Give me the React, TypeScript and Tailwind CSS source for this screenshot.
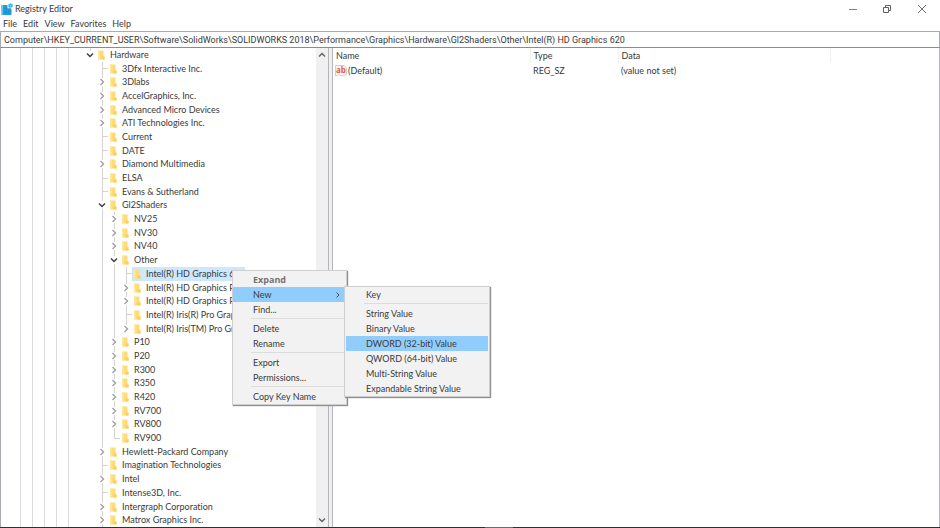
import type { ReactNode } from 'react';

type Branch = 'open' | 'closed' | 'leaf';

interface TreeRow {
  label: string;
  level: number;
  branch: Branch;
  last?: boolean;
  selected?: boolean;
}

const ROWS: TreeRow[] = [
  { label: 'Hardware', level: 0, branch: 'open', last: true },
  { label: '3Dfx Interactive Inc.', level: 1, branch: 'leaf' },
  { label: '3Dlabs', level: 1, branch: 'closed' },
  { label: 'AccelGraphics, Inc.', level: 1, branch: 'closed' },
  { label: 'Advanced Micro Devices', level: 1, branch: 'closed' },
  { label: 'ATI Technologies Inc.', level: 1, branch: 'closed' },
  { label: 'Current', level: 1, branch: 'leaf' },
  { label: 'DATE', level: 1, branch: 'leaf' },
  { label: 'Diamond Multimedia', level: 1, branch: 'closed' },
  { label: 'ELSA', level: 1, branch: 'leaf' },
  { label: 'Evans & Sutherland', level: 1, branch: 'leaf' },
  { label: 'Gl2Shaders', level: 1, branch: 'open' },
  { label: 'NV25', level: 2, branch: 'closed' },
  { label: 'NV30', level: 2, branch: 'closed' },
  { label: 'NV40', level: 2, branch: 'closed' },
  { label: 'Other', level: 2, branch: 'open' },
  { label: 'Intel(R) HD Graphics 620', level: 3, branch: 'leaf', selected: true },
  { label: 'Intel(R) HD Graphics P', level: 3, branch: 'closed' },
  { label: 'Intel(R) HD Graphics P', level: 3, branch: 'closed' },
  { label: 'Intel(R) Iris(R) Pro Grap', level: 3, branch: 'leaf' },
  { label: 'Intel(R) Iris(TM) Pro Gr', level: 3, branch: 'closed', last: true },
  { label: 'P10', level: 2, branch: 'closed' },
  { label: 'P20', level: 2, branch: 'closed' },
  { label: 'R300', level: 2, branch: 'closed' },
  { label: 'R350', level: 2, branch: 'closed' },
  { label: 'R420', level: 2, branch: 'closed' },
  { label: 'RV700', level: 2, branch: 'closed' },
  { label: 'RV800', level: 2, branch: 'closed' },
  { label: 'RV900', level: 2, branch: 'leaf', last: true },
  { label: 'Hewlett-Packard Company', level: 1, branch: 'closed' },
  { label: 'Imagination Technologies', level: 1, branch: 'leaf' },
  { label: 'Intel', level: 1, branch: 'closed' },
  { label: 'Intense3D, Inc.', level: 1, branch: 'leaf' },
  { label: 'Intergraph Corporation', level: 1, branch: 'closed' },
  { label: 'Matrox Graphics Inc.', level: 1, branch: 'closed' },
];

const KEY_PATH =
  'Computer\\HKEY_CURRENT_USER\\Software\\SolidWorks\\SOLIDWORKS 2018\\Performance\\Graphics\\Hardware\\Gl2Shaders\\Other\\Intel(R) HD Graphics 620';

function RegistryIcon() {
  return (
    <svg viewBox="0 0 12 12" className="h-3 w-3 shrink-0" aria-hidden="true">
      <path d="M.5 2h6v3.500h4V12H.5z" fill="#22a0dc" />
      <path d="M.5 2h1.500v10H.5z" fill="#6cc6ec" />
      <path d="M2 5.300h8M2 8.600h8.500M5 2v10M8 5.500V12" stroke="#1680ba" strokeWidth="0.4" />
      <path d="M7.300 1.400 9.800.2l2 1.300-.3 2.600-2.300 1-1.900-1.300z" fill="#2fb0ea" />
      <path d="M7.300 1.400 9.600 2.500l2.200-1M9.600 2.500l-.4 2.600" stroke="#9be2fb" strokeWidth="0.5" fill="none" />
    </svg>
  );
}

function FolderIcon() {
  return (
    <svg viewBox="0 0 8 10" className="h-[10px] w-2 shrink-0" aria-hidden="true">
      <path d="M1 .5h5.500v6H7.500V9.500H1z" fill="#ffdb79" />
      <path d="M1 .5h1.500v9H1z" fill="#ffe7a0" />
      <path d="M4.500 6.500h3v3h-3z" fill="#fbcf5e" />
    </svg>
  );
}

function StringValueIcon() {
  return (
    <svg viewBox="0 0 12 12" className="h-3 w-3 shrink-0" aria-hidden="true">
      <path d="M.5.5h8.500l2.500 2.500v6.500q-2 2.500-5 1t-6 .5z" fill="#f6f6f6" stroke="#c4c4c4" strokeWidth="0.8" />
      <text x="1" y="7.500" fontSize="8" fontWeight="bold" fill="#e8603c" fontFamily="Open Sans, sans-serif">
        ab
      </text>
    </svg>
  );
}

function Chevron({ open }: { open: boolean }) {
  return (
    <svg viewBox="0 0 8 8" className="h-2 w-2 shrink-0" fill="none" aria-hidden="true">
      {open ? (
        <path d="M1 2.500 4 5.500 7 2.500" stroke="#404040" strokeWidth="1.5" />
      ) : (
        <path d="M2.500 1 5.500 4 2.500 7" stroke="#a0a0a0" strokeWidth="1.4" />
      )}
    </svg>
  );
}

// The cell left of the folder: an expander, or the elbow of a key without subkeys
function Connector({ branch, last }: { branch: Branch; last?: boolean }) {
  if (branch === 'leaf') {
    return (
      <span className="flex w-3 shrink-0 flex-col pl-[6px]">
        <span className="flex-1 border-b border-l border-[#d4d4d4]" />
        <span className={last ? 'flex-1' : 'flex-1 border-l border-[#d4d4d4]'} />
      </span>
    );
  }
  return (
    <span className="flex w-3 shrink-0 flex-col items-center">
      <span className="w-px flex-1 bg-[#d4d4d4]" />
      <Chevron open={branch === 'open'} />
      <span className={last ? 'w-px flex-1' : 'w-px flex-1 bg-[#d4d4d4]'} />
    </span>
  );
}

interface MenuItemProps {
  children: ReactNode;
  bold?: boolean;
  active?: boolean;
  arrow?: boolean;
}

function MenuItem({ children, bold, active, arrow }: MenuItemProps) {
  return (
    <button
      type="button"
      role="menuitem"
      className={`flex h-[15px] w-full items-center justify-between whitespace-nowrap pl-5 pr-[2px] text-left ${
        active ? 'bg-[#91cdfc]' : ''
      } ${bold ? "font-['Open_Sans',sans-serif] font-bold text-[#747474]" : ''}`}
    >
      {children}
      {arrow && (
        <svg viewBox="0 0 8 8" className="h-2 w-2" fill="none" aria-hidden="true">
          <path d="M2.500 1.500 5 4 2.500 6.500" stroke="#404040" strokeWidth="0.9" />
        </svg>
      )}
    </button>
  );
}

function Separator() {
  return <div role="separator" className="mb-[2px] ml-[18px] mt-[1px] h-px bg-[#dcdcdc]" />;
}

function NewSubmenu() {
  return (
    <div
      role="menu"
      aria-label="New"
      className="absolute left-full top-[-1px] z-20 w-[146px] border border-[#cfcfcf] bg-[#f2f2f2] px-[1px] shadow-[1px_1px_1px_#909090]"
    >
      <MenuItem>Key</MenuItem>
      <Separator />
      <MenuItem>String Value</MenuItem>
      <MenuItem>Binary Value</MenuItem>
      <MenuItem active>DWORD (32-bit) Value</MenuItem>
      <MenuItem>QWORD (64-bit) Value</MenuItem>
      <MenuItem>Multi-String Value</MenuItem>
      <MenuItem>Expandable String Value</MenuItem>
    </div>
  );
}

function ContextMenu() {
  return (
    <div
      role="menu"
      aria-label="Key"
      className="absolute left-[148px] top-[3px] z-10 w-[115px] border border-[#cfcfcf] bg-[#f2f2f2] pr-[2px] pt-[1px] shadow-[1px_1px_1px_#909090]"
    >
      <MenuItem bold>Expand</MenuItem>
      <div className="relative">
        <MenuItem active arrow>
          New
        </MenuItem>
        <NewSubmenu />
      </div>
      <MenuItem>Find...</MenuItem>
      <Separator />
      <MenuItem>Delete</MenuItem>
      <MenuItem>Rename</MenuItem>
      <Separator />
      <MenuItem>Export</MenuItem>
      <MenuItem>Permissions...</MenuItem>
      <Separator />
      <MenuItem>Copy Key Name</MenuItem>
    </div>
  );
}

function KeyRow({ row }: { row: TreeRow }) {
  // guide lines of the levels above
  const parents = Array.from({ length: row.level }, (_, i) => i);
  return (
    <li role="treeitem" aria-selected={!!row.selected} className="relative flex min-h-0 flex-1">
      {parents.map((i) => (
        <span key={i} className="flex w-3 shrink-0 justify-center">
          {i > 0 && <span className="w-px bg-[#d4d4d4]" />}
        </span>
      ))}
      <Connector branch={row.branch} last={row.last} />
      <button
        type="button"
        className={`flex items-center gap-[5px] whitespace-nowrap pl-[1px] text-left ${row.selected ? 'bg-[#cce8ff]' : ''}`}
      >
        <FolderIcon />
        {row.label}
      </button>
      {row.selected && <ContextMenu />}
    </li>
  );
}

function KeyTree() {
  return (
    <nav aria-label="Keys" className="flex w-[316px] shrink-0 border-l border-[#a9abb3]">
      <div className="flex w-[83px] shrink-0 pl-[19px]">
        {[0, 1, 2, 3, 4].map((i) => (
          <span key={i} className="w-3 border-l border-[#dadada]" />
        ))}
      </div>
      <ul role="tree" className="flex min-w-0 flex-1 flex-col">
        {ROWS.map((row, i) => (
          <KeyRow key={i} row={row} />
        ))}
      </ul>
    </nav>
  );
}

function ScrollBar() {
  return (
    <div className="flex w-3 shrink-0 flex-col items-center justify-between bg-[#f0f0f0] py-[3px]">
      <button type="button" aria-label="Scroll up">
        <svg viewBox="0 0 8 8" className="h-2 w-2" fill="none" aria-hidden="true">
          <path d="M1 5.500 4 2.500 7 5.500" stroke="#606060" strokeWidth="1.4" />
        </svg>
      </button>
      <button type="button" aria-label="Scroll down">
        <svg viewBox="0 0 8 8" className="h-2 w-2" fill="none" aria-hidden="true">
          <path d="M1 2.500 4 5.500 7 2.500" stroke="#606060" strokeWidth="1.4" />
        </svg>
      </button>
    </div>
  );
}

function ValueTable() {
  return (
    <div className="min-w-0 flex-1 border-x border-[#b4b5bc]">
      <table className="w-full table-fixed text-left">
        <colgroup>
          <col className="w-[197px]" />
          <col className="w-[88px]" />
          <col className="w-[212px]" />
          <col />
        </colgroup>
        <thead>
          <tr className="h-[15px]">
            {['Name', 'Type', 'Data'].map((head) => (
              <th key={head} className="border-r border-[#f0f0f0] px-[3px] py-0 font-normal">
                {head}
              </th>
            ))}
            <td />
          </tr>
        </thead>
        <tbody>
          <tr className="h-[15px]">
            <td className="px-[2px] py-0">
              <span className="flex items-center gap-[1px]">
                <StringValueIcon />
                (Default)
              </span>
            </td>
            <td className="px-[3px] py-0">REG_SZ</td>
            <td className="px-[3px] py-0">(value not set)</td>
            <td />
          </tr>
        </tbody>
      </table>
    </div>
  );
}

function TitleBar() {
  return (
    <header className="flex h-[17px] items-center pl-[1px]">
      <RegistryIcon />
      <h1 className="ml-[2px] flex-1">Registry Editor</h1>
      <button type="button" aria-label="Minimize" className="flex w-[34px] justify-center">
        <svg viewBox="0 0 10 10" className="h-[10px] w-[10px]" aria-hidden="true">
          <path d="M1 5.500h8" stroke="#808080" />
        </svg>
      </button>
      <button type="button" aria-label="Restore" className="flex w-[34px] justify-center">
        <svg viewBox="0 0 10 10" className="h-[10px] w-[10px]" fill="none" stroke="#606060" aria-hidden="true">
          <path d="M1.500 3.500h5v5h-5zM3.500 3V1.500h5v5H7" />
        </svg>
      </button>
      <button type="button" aria-label="Close" className="flex w-[36px] justify-center">
        <svg viewBox="0 0 10 10" className="h-[10px] w-[10px]" stroke="#606060" aria-hidden="true">
          <path d="M1 1l8 8M9 1 1 9" strokeWidth="0.9" />
        </svg>
      </button>
    </header>
  );
}

export default function App() {
  return (
    <div className="flex h-screen flex-col overflow-hidden bg-white font-[Lato,sans-serif] text-[9px] leading-3 text-[#3a3a3a] [font-variant-ligatures:none]">
      <TitleBar />
      <nav aria-label="Menu bar" className="flex h-[14px] items-center gap-[6px] pl-[3px]">
        {['File', 'Edit', 'View', 'Favorites', 'Help'].map((name) => (
          <button key={name} type="button">
            {name}
          </button>
        ))}
      </nav>
      <input
        aria-label="Key path"
        defaultValue={KEY_PATH}
        className="h-[17px] w-full shrink-0 border border-[#a9abb3] border-b-[#8a8a92] px-[3px] font-[Roboto,sans-serif] outline-none"
      />
      <main className="flex min-h-0 flex-1">
        <KeyTree />
        <ScrollBar />
        <div className="w-1 shrink-0 border-l border-[#b4b5bc] bg-[#f0f0f0]" />
        <ValueTable />
      </main>
      {/* top edge of the taskbar, with the running window lit */}
      <div className="flex h-px shrink-0 justify-center bg-[#303030]">
        <span className="ml-[58px] w-7 bg-[#6e6e62]" />
      </div>
    </div>
  );
}
